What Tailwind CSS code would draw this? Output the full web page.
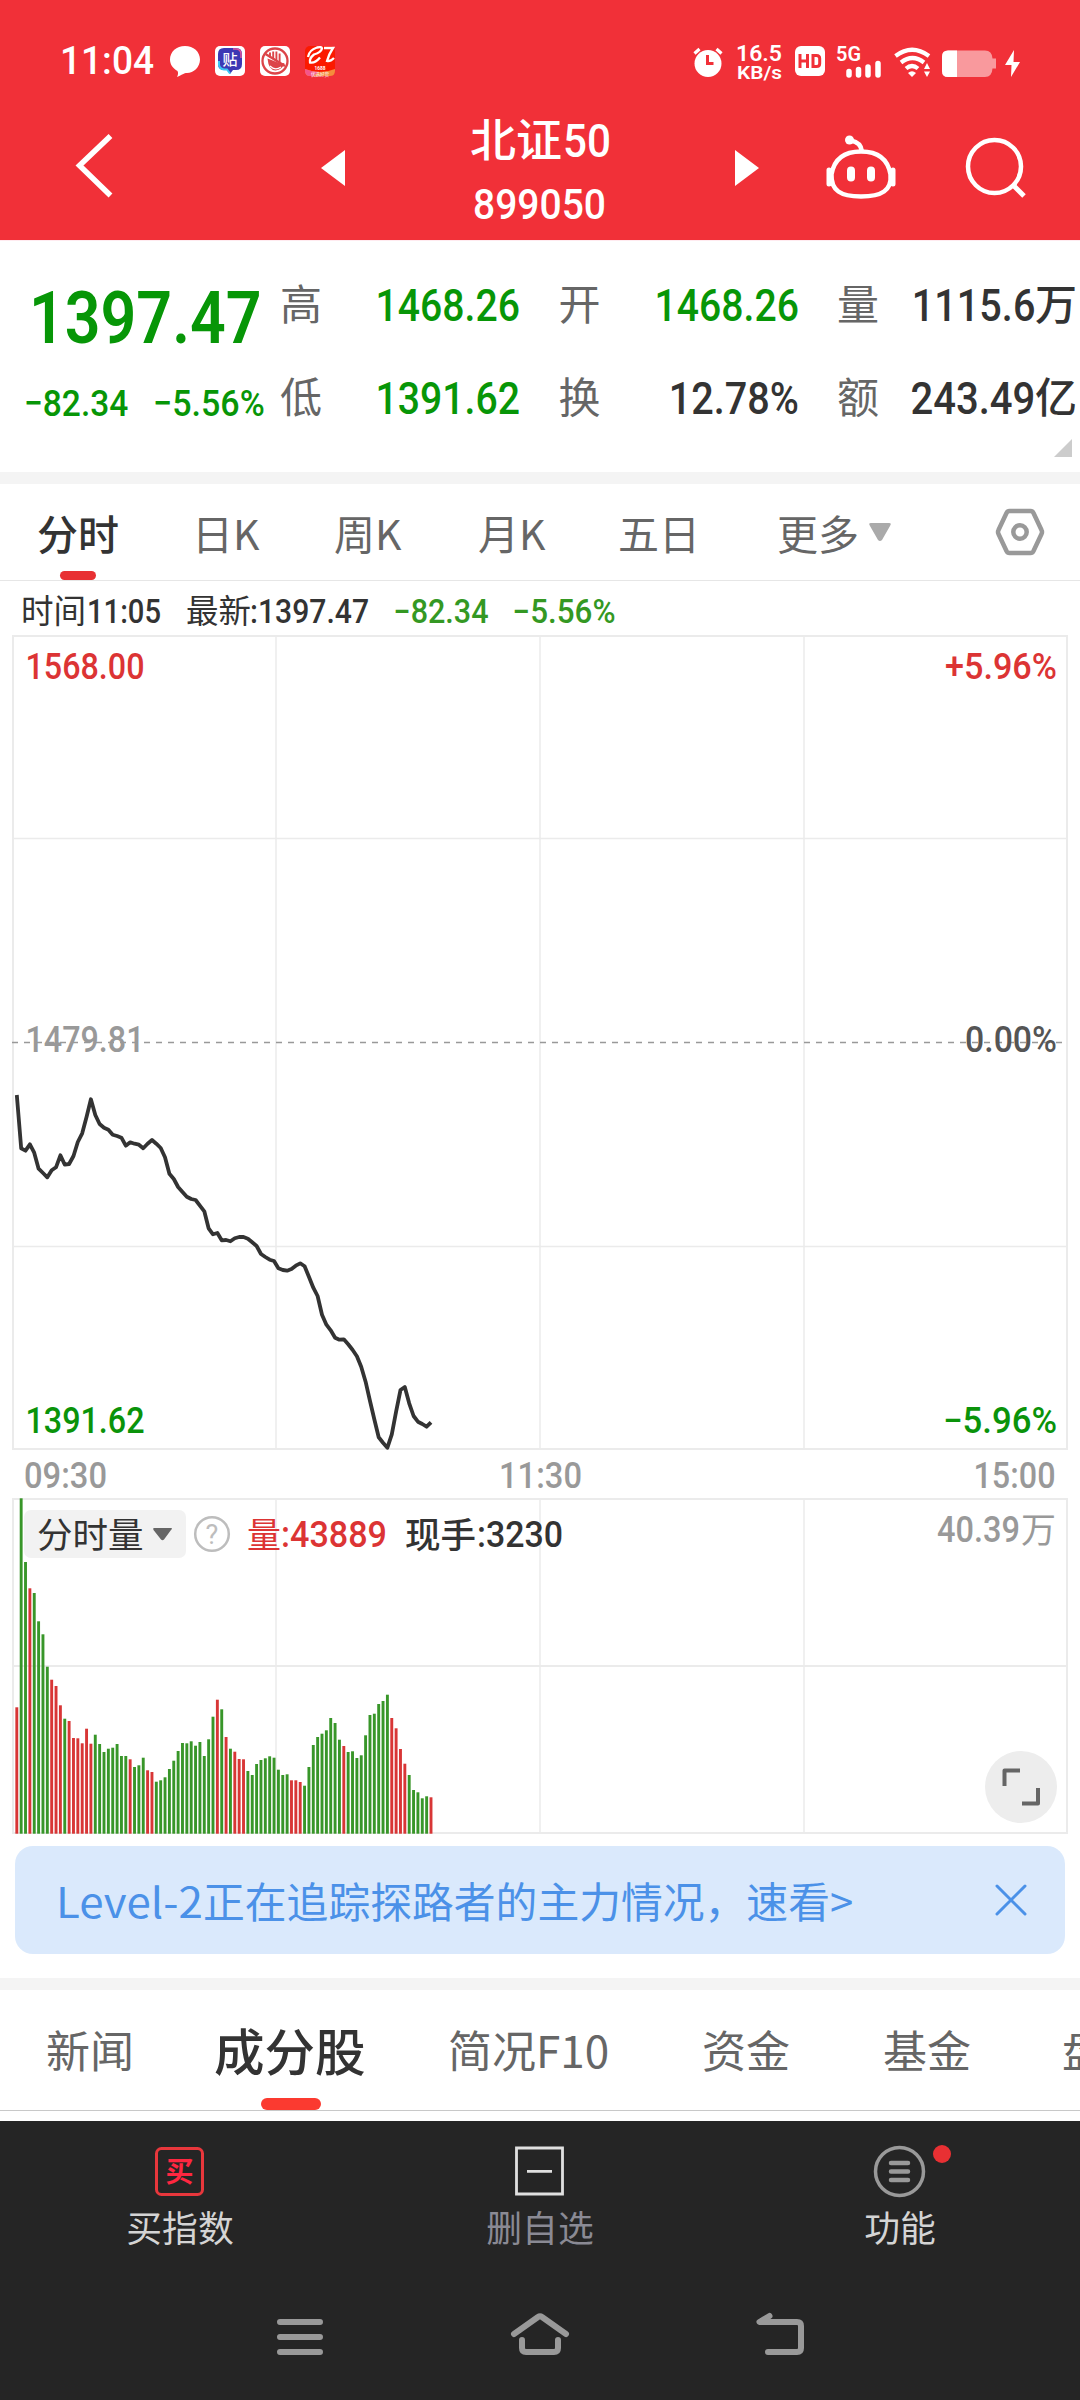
<!DOCTYPE html>
<html lang="zh-CN">
<head>
<meta charset="utf-8">
<title>北证50 899050</title>
<script src="https://cdn.jsdelivr.net/npm/@tailwindcss/browser@4"></script>
</head>
<body class="w-[1080px] h-[2400px] overflow-hidden bg-white text-[#333] font-['Roboto','Noto_Sans_CJK_SC',sans-serif]">
<div class="flex flex-col w-[1080px] h-[2400px] overflow-hidden">

<!-- header -->
<header class="h-[241px] shrink-0 bg-[#f13038] border-b border-[#ffebf0] text-white">
  <svg class="block" width="1080" height="240" viewBox="0 0 1080 240" fill="none">
    <!-- status bar, left -->
    <text x="60" y="74" font-size="38" font-weight="500" fill="#fff" textLength="94" lengthAdjust="spacingAndGlyphs">11:04</text>
    <path d="M185 46c8.500 0 15 5.800 15 13.500S193.500 73 187 73c-3 0-5 2-10 4 1-2 1.500-4 .5-6-4.500-2.500-7.500-6.500-7.500-11.500C170 51.800 176.500 46 185 46z" fill="#fff"/>
    <g>
      <rect x="215" y="46" width="30" height="30" rx="5" fill="#fff"/>
      <path d="M224 48h12q6 0 6 6v10q0 6-6 6h-3l-3 4-3-4h-3q-6 0-6-6V54q0-6 6-6z" fill="#3d38b4"/>
      <path d="M219 61v4q1 4 5 4.500h3l3 4" stroke="#3cc4f4" stroke-width="2"/>
      <path d="M233 49h4q4 1 4 5v4" stroke="#e0559c" stroke-width="1.500"/>
      <text x="222.500" y="65" font-size="15" font-weight="500" fill="#fff" font-family="Noto Sans CJK SC" textLength="15" lengthAdjust="spacingAndGlyphs">贴</text>
    </g>
    <g>
      <rect x="260" y="46" width="30" height="30" rx="5" fill="#fff"/>
      <circle cx="275" cy="61" r="12.500" stroke="#dc4448" stroke-width="2.300"/>
      <path d="M265.500 54l19.500 12" stroke="#dc4448" stroke-width="2.300"/>
      <path d="M270 52.500v5M273.200 51.500v7.500M276.400 51.500v9.500M279.600 53.500v9" stroke="#dc4448" stroke-width="1.900"/>
      <path d="M267.500 58.500l13 5 4-.5q-2 7-9 7.500-7-.5-8-12z" fill="#dc4448"/>
      <path d="M270 66q5 5 11 1" stroke="#fff" stroke-width="1.200"/>
    </g>
    <g>
      <rect x="305" y="46" width="30" height="30" rx="5" fill="#fb1a00"/>
      <path d="M305 69q15 6 30 0v2q0 5-5 5h-20q-5 0-5-5z" fill="#f58b3c"/>
      <path d="M305 69q8 3 14 3l-6 4h-3q-5 0-5-5z" fill="#f4558a"/>
      <path d="M308 57q1-7 9-9.500 5-1 5 1-1 4-8 6-5 4-4 8 5 1 10-5M324 48h9q-4 6-6 13 3 1 7-3" stroke="#fff" stroke-width="2.300"/>
      <text x="314.500" y="70" font-size="6" font-weight="700" fill="#fff" textLength="11" lengthAdjust="spacingAndGlyphs">1688</text>
      <text x="311" y="75.500" font-size="4.500" fill="#fff" font-family="Noto Sans CJK SC">优选好货</text>
    </g>
    <!-- status bar, right -->
    <circle cx="708" cy="63.500" r="13.500" fill="#fff"/>
    <path d="M694.500 53.500l5-4.500M721.500 53.500l-5-4.500" stroke="#fff" stroke-width="3.200"/>
    <path d="M707.500 55v8.500h6" stroke="#f13038" stroke-width="3"/>
    <text x="736" y="60.500" font-size="22.500" font-weight="600" fill="#fff" textLength="46" lengthAdjust="spacingAndGlyphs">16.5</text>
    <text x="737" y="78.500" font-size="19" font-weight="600" fill="#fff" textLength="45" lengthAdjust="spacingAndGlyphs">KB/s</text>
    <rect x="795" y="46" width="30" height="30" rx="6" fill="#fff"/>
    <path d="M800 54v14M807.500 54v14M800 61h7.500M813 55.500h3.500q3.200 0 3.200 3v5q0 3-3.200 3H813z" stroke="#f13038" stroke-width="3"/>
    <text x="836" y="61" font-size="20" font-weight="600" fill="#fff" textLength="25" lengthAdjust="spacingAndGlyphs">5G</text>
    <path d="M849 71.500v3.500M858.500 69.500v5.500M868 67v8M878 63.500v11.500" stroke="#fff" stroke-width="5.500" stroke-linecap="round"/>
    <path d="M895.500 56q16.500-12.500 33.500 0M901 62.500q11.500-9 23 0M906 68.500q6-5 12 0" stroke="#fff" stroke-width="4.200"/>
    <path d="M908 73q4-3.500 8 0L912 77z" fill="#fff"/>
    <path d="M924 69l3-6 3 6zM924 71.500l3 5.500 3-5.500z" fill="#fff"/>
    <path d="M948 50.500h37q7 0 7.500 8h3.500v10h-3.500q-.5 8.500-7.500 8.500h-37q-6 0-6-6V56.500q0-6 6-6z" fill="#f9999d"/>
    <path d="M957 50.500v26.500h-9q-6 0-6-6V56.500q0-6 6-6z" fill="#fff"/>
    <path d="M1014 50l-9 15h6.500l-.5 12 9-15h-6.500z" fill="#fff"/>
    <!-- navigation -->
    <path d="M110.500 136l-31 29.500 31 30" stroke="#fff" stroke-width="5.500"/>
    <path d="M345 150v36l-24-18zM735 150v36l24-18z" fill="#fff"/>
    <text x="470" y="156.500" font-size="45" font-weight="500" fill="#fff" font-family="Noto Sans CJK SC" textLength="92" lengthAdjust="spacingAndGlyphs">北证</text>
    <text x="563" y="156.500" font-size="47" font-weight="500" fill="#fff" textLength="48" lengthAdjust="spacingAndGlyphs">50</text>
    <text x="473" y="219" font-size="42" font-weight="500" fill="#fff" textLength="133" lengthAdjust="spacingAndGlyphs">899050</text>
    <g stroke="#fff" stroke-width="4.500">
      <path d="M861 151.500c17 0 27 8 29.500 23 1.500 16-9 22-29.500 22s-30-6-29.500-22c2.500-15 12.500-23 29.500-23z"/>
      <path d="M851 140.500q10 2 11 11" />
      <path d="M829 170v14M893 170v14" stroke-width="5" stroke-linecap="round"/>
      <path d="M851 170.500v7M871 170.500v7" stroke-width="8" stroke-linecap="round"/>
    </g>
    <circle cx="849.500" cy="140" r="4.500" fill="#fff"/>
    <circle cx="994.500" cy="166.500" r="26.500" stroke="#fff" stroke-width="4.500"/>
    <path d="M1013 185l11 11" stroke="#fff" stroke-width="5"/>
  </svg>
</header>

<!-- quote -->
<section class="flex h-[231px] shrink-0 pl-[25px] relative">
  <div class="w-[255px] flex flex-col shrink-0 text-[#079607] whitespace-nowrap">
    <div class="h-[77px] mt-[39px] ml-[4px] text-[73px] leading-[77px] font-semibold origin-left scale-x-[.858]">1397.47</div>
    <div class="flex mt-[27px] -ml-px text-[37px] leading-[40px] font-medium">
      <span class="w-[129px] origin-left scale-x-[.905]">−82.34</span>
      <span class="origin-left scale-x-[.92]">−5.56%</span>
    </div>
  </div>
  <div class="grid grid-cols-[240px_239px_239px] gap-x-[39.5px] content-start pt-[34px] shrink-0">
    <div class="flex justify-between items-center h-[62px] mb-[31px] text-[45px] font-medium text-[#079607] leading-[62px]"><span class="text-[#666] text-[42px] font-normal">高</span><span class="inline-block origin-right scale-x-[.87]">1468.26</span></div>
    <div class="flex justify-between items-center h-[62px] text-[45px] font-medium text-[#079607] leading-[62px]"><span class="text-[#666] text-[42px] font-normal -ml-px">开</span><span class="inline-block origin-right scale-x-[.87]">1468.26</span></div>
    <div class="flex items-center h-[62px] text-[45px] font-medium leading-[62px]"><span class="text-[#666] text-[42px] font-normal -ml-px">量</span><span class="inline-block ml-auto origin-right scale-x-[.88]">1115.6</span><span class="text-[42px]">万</span></div>
    <div class="flex justify-between items-center h-[62px] text-[45px] font-medium text-[#079607] leading-[62px]"><span class="text-[#666] text-[42px] font-normal">低</span><span class="inline-block origin-right scale-x-[.87]">1391.62</span></div>
    <div class="flex justify-between items-center h-[62px] text-[45px] font-medium leading-[62px]"><span class="text-[#666] text-[42px] font-normal -ml-px">换</span><span class="inline-block origin-right scale-x-[.88]">12.78%</span></div>
    <div class="flex items-center h-[62px] text-[45px] font-medium leading-[62px]"><span class="text-[#666] text-[42px] font-normal -ml-px">额</span><span class="inline-block ml-auto origin-right scale-x-[.89]">243.49</span><span class="text-[42px]">亿</span></div>
  </div>
  <svg class="absolute left-[1054px] top-[198px]" width="18" height="18"><path d="M18 0v18H0z" fill="#ccc"/></svg>
</section>
<div class="h-[12px] shrink-0 bg-[#f4f4f4]"></div>

<!-- period tabs -->
<nav class="relative flex items-center h-[97px] shrink-0 border-b border-[#e6e6e6] text-[41px] leading-[60px] text-[#666] pl-[37px] font-['Noto_Sans_CJK_SC',sans-serif]">
  <span class="w-[155px] text-[#333] font-medium">分时</span>
  <span class="w-[142px]">日K</span>
  <span class="w-[144px]">周K</span>
  <span class="w-[140px]">月K</span>
  <span class="w-[159px]">五日</span>
  <span class="w-[92px]">更多</span>
  <svg class="mt-px" width="22" height="19"><path d="M2 0h18q3 0 1 3l-8 14q-2 2-4 0L1 3Q-1 0 2 0z" fill="#aaa"/></svg>
  <svg class="ml-[104px]" width="50" height="48" viewBox="0 0 50 48" fill="none" stroke="#999" stroke-width="4.500"><path d="M14.500 3h21q2 0 3 2l8 17q1 2 0 4l-8 17q-1 2-3 2h-21q-2 0-3-2l-8-17q-1-2 0-4l8-17q1-2 3-2z"/><circle cx="25" cy="24" r="6.700"/></svg>
  <div class="absolute left-[60px] top-[87px] w-[36px] h-[9px] rounded-full bg-[#e83033]"></div>
</nav>

<!-- intraday and volume charts -->
<svg class="block shrink-0" width="1080" height="1265" viewBox="0 581 1080 1265" fill="none" id="chart">
  <g font-size="33" font-weight="500" fill="#333">
    <g font-family="Noto Sans CJK SC" font-size="32.500" font-weight="400"><text x="21" y="623">时间</text><text x="186" y="623">最新</text></g>
    <text x="87" y="622.500" textLength="74" lengthAdjust="spacingAndGlyphs">11:05</text>
    <text x="250" y="622.500" textLength="119" lengthAdjust="spacingAndGlyphs">:1397.47</text>
    <g fill="#349823"><text x="393.500" y="622.500" textLength="95" lengthAdjust="spacingAndGlyphs">−82.34</text><text x="512.500" y="622.500" textLength="103" lengthAdjust="spacingAndGlyphs">−5.56%</text></g>
  </g>
  <g stroke="#ebebeb" stroke-width="2">
    <path d="M12 636H1068M12 1449H1068M13 635V1450M1067 635V1450"/>
    <path d="M12 838.500H1068M12 1246.500H1068M276 635V1450M540 635V1450M804 635V1450" stroke-width="1.500"/>
    <path d="M12 1499H1068M12 1666H1068M12 1833H1068M13 1498V1834M1067 1498V1834"/>
    <path d="M276 1498V1834M540 1498V1834M804 1498V1834" stroke-width="1.500"/>
  </g>
  <path d="M12 1042.500H1064" stroke="#999" stroke-width="1.700" stroke-dasharray="6 6"/>
  <g font-size="36" font-weight="500">
    <g fill="#dc3434"><text x="25.500" y="678.500" textLength="119" lengthAdjust="spacingAndGlyphs">1568.00</text><text x="945" y="678.500" textLength="112" lengthAdjust="spacingAndGlyphs">+5.96%</text></g>
    <text x="25.500" y="1051.500" fill="#999" textLength="119" lengthAdjust="spacingAndGlyphs">1479.81</text>
    <text x="965" y="1051.500" fill="#555" textLength="92" lengthAdjust="spacingAndGlyphs">0.00%</text>
    <g fill="#0a930a"><text x="25.500" y="1432.500" textLength="119" lengthAdjust="spacingAndGlyphs">1391.62</text><text x="943" y="1432.500" textLength="114" lengthAdjust="spacingAndGlyphs">−5.96%</text></g>
    <g fill="#999"><text x="24" y="1487.500" textLength="83" lengthAdjust="spacingAndGlyphs">09:30</text><text x="499" y="1487.500" textLength="83" lengthAdjust="spacingAndGlyphs">11:30</text><text x="973.500" y="1487.500" textLength="82" lengthAdjust="spacingAndGlyphs">15:00</text></g>
  </g>
  <path id="price" stroke="#333" stroke-width="3.800" stroke-linejoin="round"/>
  <rect x="24" y="1510" width="162" height="48" rx="7" fill="#f2f2f2"/>
  <g font-family="Noto Sans CJK SC" font-size="35.500">
    <text x="37" y="1548" fill="#333">分时量</text>
    <text x="247" y="1548" fill="#dc3434" textLength="34" lengthAdjust="spacingAndGlyphs">量</text>
    <text x="405" y="1548" fill="#333" font-weight="500">现手</text>
    <text x="1021" y="1542.500" fill="#999" textLength="35" lengthAdjust="spacingAndGlyphs">万</text>
  </g>
  <path d="M154 1528h17q2 0 0 2l-7 9.500q-1.500 1.500-3 0l-7.500-9.500q-1-2 .5-2z" fill="#666"/>
  <circle cx="212" cy="1534" r="16.800" stroke="#bdbdbd" stroke-width="2.500"/>
  <text x="212" y="1543.500" text-anchor="middle" font-size="27" fill="#bdbdbd">?</text>
  <g font-size="36" font-weight="500">
    <text x="281" y="1547" fill="#dc3434" textLength="106" lengthAdjust="spacingAndGlyphs">:43889</text>
    <text x="477" y="1547" fill="#333" textLength="86" lengthAdjust="spacingAndGlyphs">:3230</text>
    <text x="937" y="1541.500" fill="#999" textLength="83" lengthAdjust="spacingAndGlyphs">40.39</text>
  </g>
  <g id="bars"></g>
  <circle cx="1021" cy="1787" r="36" fill="#ededed"/>
  <path d="M1004.500 1786V1770.500H1020M1022 1803.500H1038V1788" stroke="#666" stroke-width="4" stroke-linejoin="round"/>
</svg>

<!-- promo banner -->
<div class="flex justify-between items-center mx-[15px] h-[108px] shrink-0 rounded-[18px] bg-[#dae9fc] pl-[41px] pr-[38px] text-[41.800px] leading-[60px] text-[#4b91e8] font-['Noto_Sans_CJK_SC',sans-serif]">
  <span class="flex whitespace-nowrap"><span class="w-[147px] origin-left scale-x-[1.05]">Level-2</span><span>正在追踪探路者的主力情况，速看&gt;</span></span>
  <svg width="32" height="32" fill="none" stroke="#4b91e8" stroke-width="3"><path d="M2 2l28 28M30 2L2 30" stroke-linecap="round"/></svg>
</div>
<div class="h-[12px] mt-[24px] shrink-0 bg-[#f4f4f4]"></div>

<!-- content tabs -->
<nav class="relative flex items-center h-[121px] shrink-0 border-b border-[#c8c8c8] pl-[46px] pb-[2px] text-[44px] leading-[64px] text-[#666] whitespace-nowrap font-['Noto_Sans_CJK_SC',sans-serif]">
  <span class="w-[168px] shrink-0">新闻</span>
  <span class="w-[234px] shrink-0 text-[50.500px] text-[#333] font-medium">成分股</span>
  <span class="w-[254px] shrink-0">简况F10</span>
  <span class="w-[181px] shrink-0">资金</span>
  <span class="w-[179px] shrink-0">基金</span>
  <span class="shrink-0">盘口</span>
  <div class="absolute left-[261px] top-[108px] w-[60px] h-[12px] rounded-full bg-[#fb3a30]"></div>
</nav>
<div class="h-[10px] shrink-0"></div>

<!-- action bar -->
<footer class="h-[279px] shrink-0 bg-[#252525]">
  <div class="grid grid-cols-3 h-[150px] pt-[24px] text-[35.800px] leading-[52px] text-[#d4d4d4] font-['Noto_Sans_CJK_SC',sans-serif]">
    <div class="flex flex-col items-center">
      <svg width="54" height="54" viewBox="0 0 54 54" fill="none"><rect x="3.500" y="3.500" width="46" height="46" rx="5" stroke="#e8373c" stroke-width="3"/><text x="12.500" y="37" font-size="28" font-weight="700" fill="#ff2740">买</text></svg>
      <span class="mt-px">买指数</span>
    </div>
    <div class="flex flex-col items-center text-[#8a8a94]">
      <svg width="54" height="54" fill="none" stroke="#e0e0e0" stroke-width="2.800"><path d="M3.500 3h46v46h-46zM14 26.300h25"/></svg>
      <span class="mt-px">删自选</span>
    </div>
    <div class="flex flex-col items-center relative">
      <svg width="54" height="54" fill="none" stroke="#999"><circle cx="26.500" cy="26.500" r="24" stroke-width="3.500"/><path d="M18 18h17M18 26.500h17M18 35h17" stroke-width="4.500" stroke-linecap="round"/></svg>
      <span class="mt-px">功能</span>
      <div class="absolute left-[213px] top-0 w-[18px] h-[18px] rounded-full bg-[#e83033]"></div>
    </div>
  </div>
  <svg class="block" width="1080" height="129" viewBox="0 2271 1080 129" fill="none" stroke="#999" stroke-width="6" stroke-linecap="round" stroke-linejoin="round">
    <path d="M280 2322h40M280 2337h40M280 2352h40"/>
    <path d="M514 2334l24-17q2-1.500 4 0l24 17M522 2340v8q0 4 4 4h28q4 0 4-4v-8"/>
    <path d="M769.500 2316l-10 6H797q4 0 4 4v22q0 4-4 4H768"/>
  </svg>
</footer>
</div>

<script>
  const STEP = 4.36, X0 = 16.8;
  // price line, thirds of a pixel below y = 1020, one value a minute
  const price = [225,385,392,373,398,446,459,472,451,442,406,434,432,408,366,340,290,238,285,312,323,329,344,348,353,377,367,371,374,385,371,360,371,384,412,461,477,501,516,530,537,540,557,574,625,643,639,661,660,664,655,651,651,656,667,678,702,711,719,723,745,750,752,747,737,730,739,770,803,828,884,914,931,953,959,958,973,989,1009,1040,1085,1143,1198,1252,1268,1283,1243,1175,1110,1101,1150,1188,1205,1212,1220,1207];
  document.getElementById('price').setAttribute('d', price.map((v, i) => (i ? 'L' : 'M') + (X0 + i * STEP).toFixed(1) + ' ' + (1020 + v / 3).toFixed(1)).join(''));
  // volume bars, thirds of a pixel below y = 1480
  const vol = [682,55,246,325,339,424,463,560,599,618,676,716,723,774,775,790,746,791,764,792,816,806,803,792,828,828,838,861,856,833,871,876,905,901,892,867,842,813,789,790,784,797,786,828,778,710,659,688,771,806,815,837,838,873,885,852,840,835,829,833,869,885,883,901,901,906,917,861,795,771,761,751,714,729,779,798,816,814,834,826,766,705,701,672,663,644,714,745,807,851,885,930,937,955,949,952];
  const red = new Set([0,3,8,9,10,12,13,14,15,16,17,26,30,31,46,48,50,51,52,63,64,65,75,86,87,88,89,95]);
  document.getElementById('bars').innerHTML = vol.map((v, i) => {
    const y = 1480 + v / 3;
    return `<rect x="${(X0 + i * STEP - 1.45).toFixed(2)}" y="${y.toFixed(1)}" width="2.9" height="${(1833.7 - y).toFixed(1)}" fill="${red.has(i) ? '#d83636' : '#389629'}"/>`;
  }).join('');
</script>
</body>
</html>
